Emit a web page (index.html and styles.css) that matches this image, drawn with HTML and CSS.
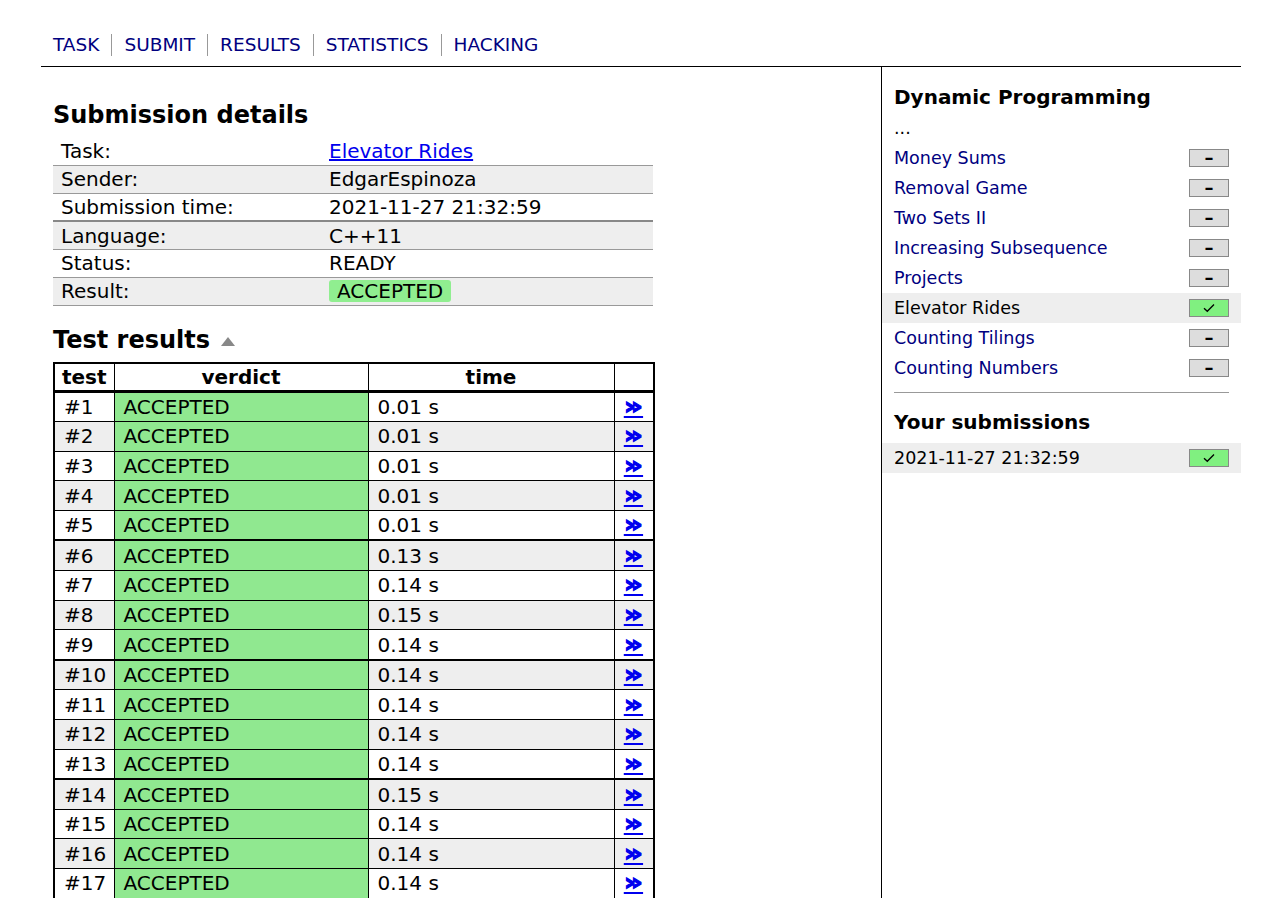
FILE: index.html
```html
<!DOCTYPE html>
<html>
<head>
<meta charset="utf-8">
<title>Submission details</title>
<link rel="stylesheet" href="styles.css">
</head>
<body>
<div class="page">
  <nav class="nav">
    <a class="nav-link" href="#">TASK</a>
    <a class="nav-link" href="#">SUBMIT</a>
    <a class="nav-link" href="#">RESULTS</a>
    <a class="nav-link" href="#">STATISTICS</a>
    <a class="nav-link" href="#">HACKING</a>
  </nav>
  <div class="layout">
    <main class="main">
      <h2 class="heading">Submission details</h2>
      <table class="details">
        <tr><td class="label">Task:</td><td><a class="task-link" href="#">Elevator Rides</a></td></tr>
        <tr class="alt"><td class="label">Sender:</td><td>EdgarEspinoza</td></tr>
        <tr class="thick"><td class="label">Submission time:</td><td>2021-11-27 21:32:59</td></tr>
        <tr class="alt"><td class="label">Language:</td><td>C++11</td></tr>
        <tr><td class="label">Status:</td><td>READY</td></tr>
        <tr class="alt"><td class="label">Result:</td><td><span class="result-badge">ACCEPTED</span></td></tr>
      </table>
      <h2 class="heading heading-tests">Test results <svg class="toggle" viewBox="0 0 14 9" width="14" height="9"><path d="M7 0 L14 9 L0 9 Z" fill="#888"/></svg></h2>
      <table class="tests">
        <colgroup><col class="c-test"><col class="c-verdict"><col class="c-time"><col class="c-link"></colgroup>
        <thead>
          <tr><th>test</th><th>verdict</th><th>time</th><th></th></tr>
        </thead>
        <tbody>
          <tr><td>#1</td><td class="verdict">ACCEPTED</td><td>0.01 s</td><td class="lnk"><a href="#">&raquo;</a></td></tr>
          <tr class="alt"><td>#2</td><td class="verdict">ACCEPTED</td><td>0.01 s</td><td class="lnk"><a href="#">&raquo;</a></td></tr>
          <tr><td>#3</td><td class="verdict">ACCEPTED</td><td>0.01 s</td><td class="lnk"><a href="#">&raquo;</a></td></tr>
          <tr class="alt"><td>#4</td><td class="verdict">ACCEPTED</td><td>0.01 s</td><td class="lnk"><a href="#">&raquo;</a></td></tr>
          <tr class="group-end"><td>#5</td><td class="verdict">ACCEPTED</td><td>0.01 s</td><td class="lnk"><a href="#">&raquo;</a></td></tr>
          <tr class="alt"><td>#6</td><td class="verdict">ACCEPTED</td><td>0.13 s</td><td class="lnk"><a href="#">&raquo;</a></td></tr>
          <tr><td>#7</td><td class="verdict">ACCEPTED</td><td>0.14 s</td><td class="lnk"><a href="#">&raquo;</a></td></tr>
          <tr class="alt"><td>#8</td><td class="verdict">ACCEPTED</td><td>0.15 s</td><td class="lnk"><a href="#">&raquo;</a></td></tr>
          <tr class="group-end"><td>#9</td><td class="verdict">ACCEPTED</td><td>0.14 s</td><td class="lnk"><a href="#">&raquo;</a></td></tr>
          <tr class="alt"><td>#10</td><td class="verdict">ACCEPTED</td><td>0.14 s</td><td class="lnk"><a href="#">&raquo;</a></td></tr>
          <tr><td>#11</td><td class="verdict">ACCEPTED</td><td>0.14 s</td><td class="lnk"><a href="#">&raquo;</a></td></tr>
          <tr class="alt"><td>#12</td><td class="verdict">ACCEPTED</td><td>0.14 s</td><td class="lnk"><a href="#">&raquo;</a></td></tr>
          <tr class="group-end"><td>#13</td><td class="verdict">ACCEPTED</td><td>0.14 s</td><td class="lnk"><a href="#">&raquo;</a></td></tr>
          <tr class="alt"><td>#14</td><td class="verdict">ACCEPTED</td><td>0.15 s</td><td class="lnk"><a href="#">&raquo;</a></td></tr>
          <tr><td>#15</td><td class="verdict">ACCEPTED</td><td>0.14 s</td><td class="lnk"><a href="#">&raquo;</a></td></tr>
          <tr class="alt"><td>#16</td><td class="verdict">ACCEPTED</td><td>0.14 s</td><td class="lnk"><a href="#">&raquo;</a></td></tr>
          <tr><td>#17</td><td class="verdict">ACCEPTED</td><td>0.14 s</td><td class="lnk"><a href="#">&raquo;</a></td></tr>
        </tbody>
      </table>
    </main>
    <aside class="sidebar">
      <h3 class="side-heading">Dynamic Programming</h3>
      <ul class="task-list">
        <li class="task-row">...</li>
        <li class="task-row"><a class="side-link" href="#">Money Sums</a><span class="score">&ndash;</span></li>
        <li class="task-row"><a class="side-link" href="#">Removal Game</a><span class="score">&ndash;</span></li>
        <li class="task-row"><a class="side-link" href="#">Two Sets II</a><span class="score">&ndash;</span></li>
        <li class="task-row"><a class="side-link" href="#">Increasing Subsequence</a><span class="score">&ndash;</span></li>
        <li class="task-row"><a class="side-link" href="#">Projects</a><span class="score">&ndash;</span></li>
        <li class="task-row current"><span class="side-current">Elevator Rides</span><span class="score full"><svg class="check" viewBox="0 0 12 10" width="12" height="10"><path d="M1 5.2 L4.3 8.3 L11 1.5" fill="none" stroke="#000" stroke-width="1.3"/></svg></span></li>
        <li class="task-row"><a class="side-link" href="#">Counting Tilings</a><span class="score">&ndash;</span></li>
        <li class="task-row"><a class="side-link" href="#">Counting Numbers</a><span class="score">&ndash;</span></li>
      </ul>
      <hr class="divider">
      <h3 class="side-heading side-heading-sub">Your submissions</h3>
      <ul class="task-list">
        <li class="task-row current"><span class="side-current">2021-11-27 21:32:59</span><span class="score full"><svg class="check" viewBox="0 0 12 10" width="12" height="10"><path d="M1 5.2 L4.3 8.3 L11 1.5" fill="none" stroke="#000" stroke-width="1.3"/></svg></span></li>
      </ul>
    </aside>
  </div>
</div>
</body>
</html>
```

FILE: styles.css
```css
html, body {
  margin: 0;
  padding: 0;
  background: #fff;
}
body {
  font-family: "DejaVu Sans", Verdana, sans-serif;
  color: #000;
  font-size: 17.5px;
}
.page {
  width: 1200px;
  margin-left: 41px;
}
.nav {
  display: flex;
  align-items: center;
  height: 67px;
  box-sizing: border-box;
  padding: 34px 0 10px 12px;
  border-bottom: 1px solid #000;
}
.nav-link {
  color: #000080;
  text-decoration: none;
  font-size: 18.5px;
  line-height: 22px;
  padding: 0 12px;
  border-left: 1px solid #999;
}
.nav-link:first-child {
  padding-left: 0;
  border-left: none;
}
.layout {
  display: flex;
  min-height: 831px;
}
.main {
  width: 840px;
  box-sizing: border-box;
  padding: 34px 0 0 12px;
}
.heading {
  margin: 0 0 9px 0;
  font-size: 24px;
  line-height: 28px;
  font-weight: bold;
}
.heading-tests {
  margin-top: 20px;
  margin-bottom: 8px;
}
.toggle {
  vertical-align: 2px;
  margin-left: 3px;
}
.details {
  width: 600px;
  border-collapse: collapse;
  font-size: 20px;
}
.details td {
  height: 26.75px;
  padding: 0 8px;
  border-bottom: 1px solid #999;
  vertical-align: middle;
}
.details td.label {
  width: 252px;
}
.details tr.alt td {
  background: #eee;
}
.details tr.thick td {
  border-bottom: 2px solid #888;
}
.task-link {
  color: #0000ee;
  text-decoration: underline;
}
.result-badge {
  display: inline-block;
  background: #90ee90;
  border-radius: 3px;
  padding: 0 8px;
  line-height: 22px;
}
.tests {
  width: 600px;
  border-collapse: collapse;
  table-layout: fixed;
  border: 2px solid #000;
  font-size: 20px;
}
.c-test { width: 60px; }
.c-verdict { width: 254px; }
.c-time { width: 246px; }
.c-link { width: 40px; }
.tests th {
  height: 26px;
  padding: 0;
  border: 1px solid #000;
  border-bottom: 3px solid #000;
  font-weight: bold;
  text-align: center;
}
.tests td {
  height: 28.6px;
  padding: 0 0 0 9px;
  border: 1px solid #000;
  vertical-align: middle;
}
.tests tr.alt td {
  background: #eee;
}
.tests tr.group-end td {
  border-bottom: 2px solid #000;
}
.tests td.verdict,
.tests tr.alt td.verdict {
  background: #90e890;
}
.tests td.lnk {
  padding: 0;
  text-align: center;
}
.tests td.lnk a {
  display: inline-block;
  color: #0000ee;
  font-weight: bold;
  font-size: 23px;
  line-height: 22px;
  transform: scaleX(1.3);
  -webkit-text-stroke: 1.1px #0000ee;
  text-decoration: underline;
  text-decoration-thickness: 2px;
  text-underline-offset: 2px;
}
.sidebar {
  width: 359px;
  border-left: 1px solid #000;
  padding-top: 18px;
}
.side-heading {
  margin: 0 12px 4px 12px;
  font-size: 20px;
  line-height: 24px;
  font-weight: bold;
}
.side-heading-sub {
  margin-top: 17px;
  margin-bottom: 9px;
}
.task-list {
  list-style: none;
  margin: 0;
  padding: 0;
}
.task-row {
  display: flex;
  align-items: center;
  justify-content: space-between;
  height: 30px;
  padding: 0 12px;
  font-size: 17.5px;
}
.task-row.current {
  background: #eee;
}
.side-link {
  color: #000080;
  text-decoration: none;
}
.score {
  display: flex;
  align-items: center;
  justify-content: center;
  box-sizing: border-box;
  width: 40px;
  height: 18px;
  background: #ddd;
  border: 1px solid #888;
  font-size: 18px;
  font-weight: bold;
  line-height: 16px;
}
.score.full {
  background: #80f080;
}
.divider {
  border: none;
  border-top: 1px solid #999;
  margin: 9px 12px 0 12px;
  height: 0;
}
```
